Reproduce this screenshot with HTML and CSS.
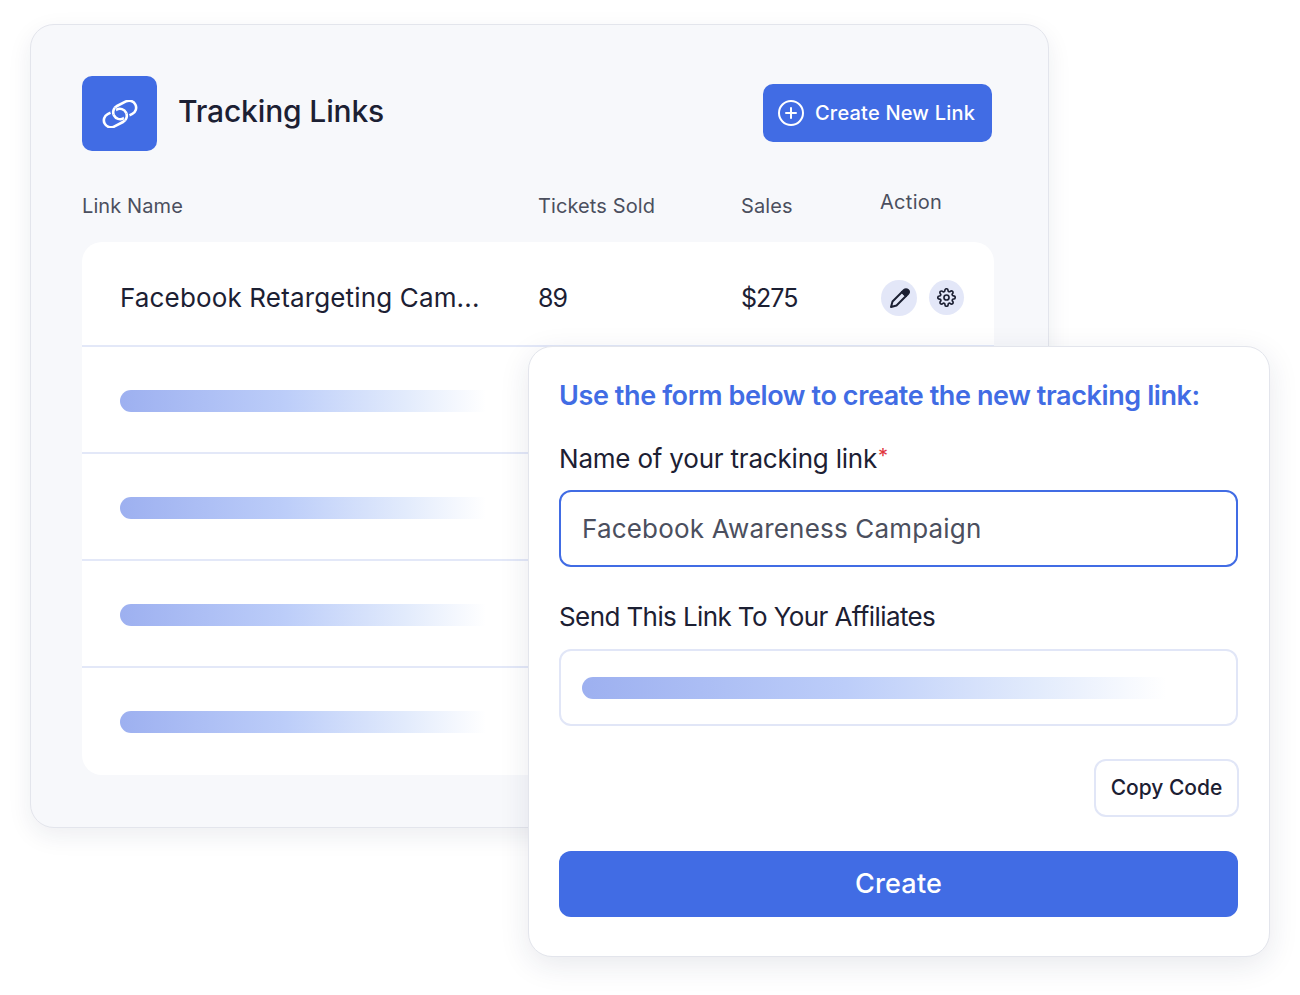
FILE: index.html
```html
<!DOCTYPE html>
<html lang="en">
<head>
    <meta charset="UTF-8">
    <meta name="viewport" content="width=device-width, initial-scale=1.0">
    <title>Tracking Links</title>
    <link rel="stylesheet" href="styles.css">
</head>
<body>

    <div class="stage">
        <div class="panel">
            <div class="panel-head">
                <div class="head-icon">
                    <svg width="38" height="28" viewBox="0 0 38 28" fill="none" stroke-width="2.6">
                        <defs>
                            <clipPath id="cross-a"><rect x="1.5" y="2.5" width="6.5" height="6"/></clipPath>
                            <clipPath id="cross-b"><rect x="-8" y="-8.5" width="6.5" height="6"/></clipPath>
                        </defs>
                        <g transform="translate(19 14) rotate(-27)">
                            <rect x="-18" y="-5.5" width="24" height="14" rx="7" stroke="#fff"/>
                            <rect x="-6" y="-8.5" width="24" height="14" rx="7" stroke="#fff"/>
                            <!-- links pass over each other at the two crossings -->
                            <g clip-path="url(#cross-a)">
                                <rect x="-18" y="-5.5" width="24" height="14" rx="7" stroke="#416ce4" stroke-width="6"/>
                                <rect x="-18" y="-5.5" width="24" height="14" rx="7" stroke="#fff"/>
                            </g>
                            <g clip-path="url(#cross-b)">
                                <rect x="-6" y="-8.5" width="24" height="14" rx="7" stroke="#416ce4" stroke-width="6"/>
                                <rect x="-6" y="-8.5" width="24" height="14" rx="7" stroke="#fff"/>
                            </g>
                        </g>
                    </svg>
                </div>
                <h1>Tracking Links</h1>
                <button class="btn-new">
                    <svg width="26" height="26" viewBox="0 0 26 26" fill="none" stroke="#fff" stroke-width="2" stroke-linecap="round">
                        <circle cx="13" cy="13" r="12"/>
                        <path d="M13 8v10M8 13h10"/>
                    </svg>
                    Create New Link
                </button>
            </div>

            <div class="table-head">
                <span>Link Name</span>
                <span>Tickets Sold</span>
                <span>Sales</span>
                <span class="head-action">Action</span>
            </div>

            <div class="table-card">
                <div class="row row-first">
                    <span>Facebook Retargeting Cam...</span>
                    <span class="num">89</span>
                    <span class="num">$275</span>
                    <div class="actions">
                        <span class="round-btn round-big">
                            <svg width="24" height="24" viewBox="0 0 24 24" fill="none" stroke="#1c2033" stroke-width="2" stroke-linejoin="round">
                                <path d="M4 21 L5.5 15.5 L15 6 L19 10 L9.5 19.5 Z"/>
                                <path d="M15 6 L17 4 A2.6 2.6 0 0 1 21 8 L19 10 Z" fill="#1c2033"/>
                            </svg>
                        </span>
                        <span class="round-btn">
                            <svg width="19" height="19" viewBox="0 0 24 24" fill="none" stroke="#1c2033" stroke-width="2.1" stroke-linejoin="round">
                                <circle cx="12" cy="12" r="3.2"/>
                                <path d="M19.4 15a1.65 1.65 0 0 0 .33 1.82l.06.06a2 2 0 1 1-2.83 2.83l-.06-.06a1.65 1.65 0 0 0-2.82 1.17V21a2 2 0 0 1-4 0v-.09A1.65 1.65 0 0 0 7.25 19.7l-.06.06a2 2 0 1 1-2.83-2.83l.06-.06a1.65 1.65 0 0 0-1.17-2.82H3a2 2 0 0 1 0-4h.09A1.65 1.65 0 0 0 4.3 7.25l-.06-.06a2 2 0 1 1 2.83-2.83l.06.06a1.65 1.65 0 0 0 2.82-1.17V3a2 2 0 0 1 4 0v.09a1.65 1.65 0 0 0 2.82 1.17l.06-.06a2 2 0 1 1 2.83 2.83l-.06.06a1.65 1.65 0 0 0 1.17 2.82H21a2 2 0 0 1 0 4h-.09a1.65 1.65 0 0 0-1.51 1z"/>
                            </svg>
                        </span>
                    </div>
                </div>
                <div class="row"><div class="skeleton"></div></div>
                <div class="row"><div class="skeleton"></div></div>
                <div class="row"><div class="skeleton"></div></div>
                <div class="row row-last"><div class="skeleton"></div></div>
            </div>
        </div>

        <div class="popup">
            <h2>Use the form below to create the new tracking link:</h2>
            <label class="field-label">Name of your tracking link<span class="req">*</span></label>
            <div class="input input-active">Facebook Awareness Campaign</div>
            <label class="field-label label-second">Send This Link To Your Affiliates</label>
            <div class="input"><div class="skeleton skeleton-wide"></div></div>
            <div class="copy-line"><button class="btn-copy">Copy Code</button></div>
            <button class="btn-create">Create</button>
        </div>
    </div>

</body>
</html>
```

FILE: styles.css
```css
* {
    box-sizing: border-box;
}

body {
    margin: 0;
    background-color: #ffffff;
    color: #1c2033;
    font-family: "Inter", "Liberation Sans", sans-serif;
}

.stage {
    position: relative;
    width: 1300px;
    height: 995px;
    padding: 24px 0 0 30px;
    overflow: hidden;
}

.panel {
    width: 1019px;
    height: 804px;
    padding: 51px 55px 0 51px;
    background-color: #f7f8fb;
    border: 1px solid #e3e5ec;
    border-radius: 24px;
    box-shadow: 0 8px 24px rgba(30, 40, 80, 0.08);
}

.panel-head {
    display: flex;
    align-items: center;
    height: 75px;
}

.head-icon {
    display: flex;
    align-items: center;
    justify-content: center;
    width: 75px;
    height: 75px;
    background-color: #416ce4;
    border-radius: 10px;
}

h1 {
    margin: 0 0 6px 21px;
    font-size: 30px;
    font-weight: 500;
    letter-spacing: -0.15px;
}

.btn-new {
    display: flex;
    align-items: center;
    gap: 11px;
    width: 229px;
    height: 58px;
    margin: 0 1px 2px auto;
    padding: 0 0 0 15px;
    background-color: #416ce4;
    color: #fff;
    border: none;
    border-radius: 10px;
    font-family: inherit;
    font-size: 20px;
    font-weight: 500;
    letter-spacing: 0.2px;
}

.table-head {
    display: grid;
    grid-template-columns: 456px 203px 139px 1fr;
    align-items: center;
    height: 91px;
    padding-top: 18px;
    color: #4b4f5e;
    font-size: 20px;
    letter-spacing: 0.1px;
}

.head-action {
    margin-top: -8px;
    letter-spacing: 0.3px;
}

.table-card {
    width: 912px;
    height: 533px;
    background-color: #fff;
    border-radius: 20px;
}

.row {
    display: flex;
    align-items: center;
    height: 107px;
    padding: 2px 0 0 38px;
    border-bottom: 2px solid #e3e8f8;
}

.row-first {
    display: grid;
    grid-template-columns: 419px 203px 139px 1fr;
    height: 105px;
    padding-top: 8px;
    font-size: 26px;
    letter-spacing: 0.15px;
}

.num {
    margin-left: -1px;
    font-size: 25px;
    letter-spacing: -1px;
}

.row-last {
    padding-top: 0;
    border-bottom: none;
}

.actions {
    display: flex;
    align-items: center;
    gap: 12px;
}

.round-btn {
    display: flex;
    align-items: center;
    justify-content: center;
    width: 35px;
    height: 35px;
    background-color: #e3e7f8;
    border-radius: 50%;
}

.round-big {
    width: 36px;
    height: 36px;
}

.skeleton {
    width: 366px;
    height: 22px;
    background: linear-gradient(90deg, #9db0f0 0%, #bccdf9 45%, #e2ebfc 78%, #ffffff 100%);
    border-radius: 11px 0 0 11px;
}

.skeleton-wide {
    width: 584px;
}

/* form card sits over the table */
.popup {
    position: absolute;
    left: 528px;
    top: 346px;
    width: 742px;
    height: 611px;
    padding: 30px 30px 0 30px;
    background-color: #fff;
    border: 1px solid #e3e5ec;
    border-radius: 24px;
    box-shadow: 0 8px 30px rgba(30, 40, 80, 0.1);
}

h2 {
    margin: 0;
    color: #416ce4;
    font-size: 27px;
    font-weight: 600;
    line-height: 38px;
    letter-spacing: -0.4px;
    white-space: nowrap;
}

.field-label {
    display: block;
    margin-top: 25px;
    font-size: 26px;
    line-height: 38px;
    letter-spacing: -0.2px;
}

.req {
    display: inline-block;
    margin-left: 1px;
    color: #e0353d;
    font-size: 20px;
    line-height: 20px;
    vertical-align: 5px;
}

.label-second {
    margin-top: 31px;
    letter-spacing: -0.6px;
}

.input {
    display: flex;
    align-items: center;
    width: 679px;
    height: 77px;
    margin-top: 13px;
    padding: 0 21px;
    border: 2px solid #e1e6f7;
    border-radius: 12px;
    color: #4b4f5e;
    font-size: 26px;
    letter-spacing: 0.18px;
}

.input-active {
    margin-top: 12px;
    border-color: #416ce4;
}

.copy-line {
    display: flex;
    justify-content: flex-end;
    margin-top: 33px;
}

.btn-copy {
    width: 145px;
    height: 58px;
    padding: 0 0 2px 0;
    background-color: #fff;
    color: #1c2033;
    border: 2px solid #e1e6f7;
    border-radius: 12px;
    font-family: inherit;
    font-size: 21px;
    font-weight: 500;
    letter-spacing: 0;
}

.btn-create {
    display: block;
    width: 679px;
    height: 66px;
    margin-top: 34px;
    padding: 0 0 2px 0;
    background-color: #416ce4;
    color: #fff;
    border: none;
    border-radius: 12px;
    font-family: inherit;
    font-size: 27px;
    font-weight: 500;
    letter-spacing: 0.2px;
}
```
